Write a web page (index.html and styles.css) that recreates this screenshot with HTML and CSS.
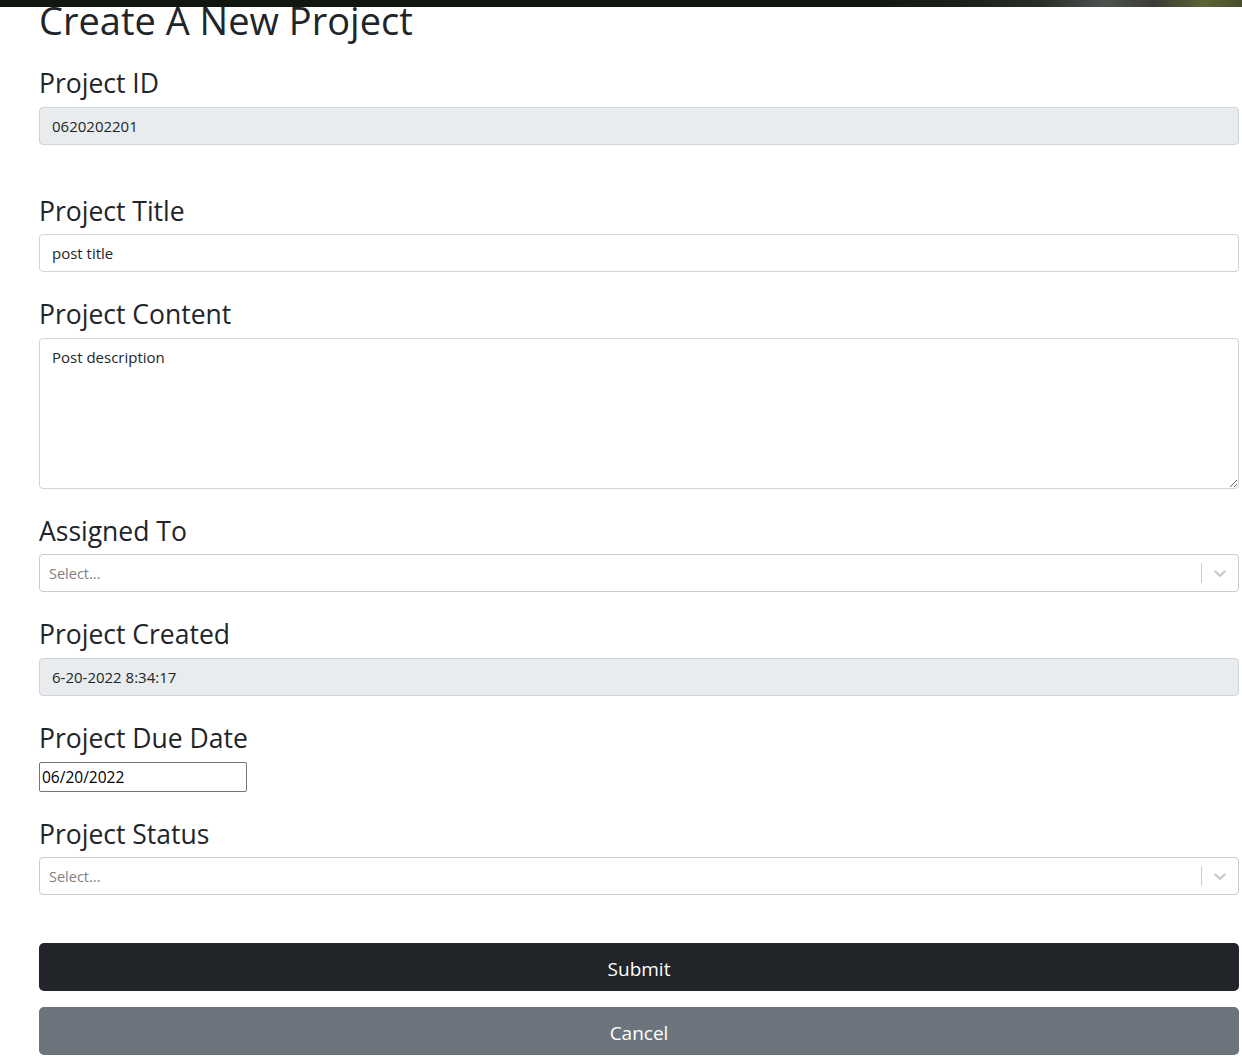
FILE: index.html
```html
<!DOCTYPE html>
<html lang="en">
<head>
<meta charset="utf-8">
<title>Create A New Project</title>
<link rel="stylesheet" href="styles.css">
</head>
<body>
<div class="topbar"></div>
<main class="page">
  <h1 class="title">Create A New Project</h1>
  <form class="form">
    <div class="group group-wide">
      <h3 class="label">Project ID</h3>
      <input class="control control-readonly" type="text" value="0620202201" readonly>
    </div>
    <div class="group">
      <h3 class="label">Project Title</h3>
      <input class="control" type="text" value="post title">
    </div>
    <div class="group">
      <h3 class="label">Project Content</h3>
      <textarea class="control control-area">Post description</textarea>
    </div>
    <div class="group">
      <h3 class="label">Assigned To</h3>
      <div class="select">
        <div class="select-value">Select...</div>
        <div class="select-indicators">
          <span class="select-sep"></span>
          <span class="select-arrow">
            <svg width="20" height="20" viewBox="0 0 20 20" aria-hidden="true"><path d="M4.516 7.548c0.436-0.446 1.043-0.481 1.576 0l3.908 3.747 3.908-3.747c0.533-0.481 1.141-0.446 1.574 0 0.436 0.445 0.408 1.197 0 1.615-0.406 0.418-4.695 4.502-4.695 4.502-0.217 0.223-0.502 0.335-0.787 0.335s-0.57-0.112-0.789-0.335c0 0-4.287-4.084-4.695-4.502s-0.436-1.17 0-1.615z"/></svg>
          </span>
        </div>
      </div>
    </div>
    <div class="group">
      <h3 class="label">Project Created</h3>
      <input class="control control-readonly" type="text" value="6-20-2022 8:34:17" readonly>
    </div>
    <div class="group">
      <h3 class="label">Project Due Date</h3>
      <input class="date" type="text" value="06/20/2022">
    </div>
    <div class="group group-wide">
      <h3 class="label">Project Status</h3>
      <div class="select">
        <div class="select-value">Select...</div>
        <div class="select-indicators">
          <span class="select-sep"></span>
          <span class="select-arrow">
            <svg width="20" height="20" viewBox="0 0 20 20" aria-hidden="true"><path d="M4.516 7.548c0.436-0.446 1.043-0.481 1.576 0l3.908 3.747 3.908-3.747c0.533-0.481 1.141-0.446 1.574 0 0.436 0.445 0.408 1.197 0 1.615-0.406 0.418-4.695 4.502-4.695 4.502-0.217 0.223-0.502 0.335-0.787 0.335s-0.57-0.112-0.789-0.335c0 0-4.287-4.084-4.695-4.502s-0.436-1.17 0-1.615z"/></svg>
          </span>
        </div>
      </div>
    </div>
    <button class="btn btn-dark" type="button">Submit</button>
    <button class="btn btn-gray" type="button">Cancel</button>
  </form>
</main>
</body>
</html>
```

FILE: styles.css
```css
* { box-sizing: border-box; }
html, body { margin: 0; padding: 0; background: #fff; }
body {
  font-family: "Open Sans", "Noto Sans", "Liberation Sans", sans-serif;
  color: #212529;
  overflow: hidden;
  height: 1060px;
}
.topbar {
  position: fixed;
  top: 0; left: 0; right: 0;
  height: 7px;
  z-index: 10;
  background: linear-gradient(90deg, #121610 0%, #131711 70%, #1c2219 78%, #2a2f2a 84%, #4d524f 89%, #3a3d33 93%, #5d6334 97%, #4a4e2a 100%);
}
.page {
  width: 1200px;
  margin-left: 39px;
}
.title {
  font-size: 38px;
  font-weight: 400;
  line-height: 48px;
  margin: -4px 0 21px;
}
.form { display: flex; flex-direction: column; }
.group { margin-bottom: 24px; display: flex; flex-direction: column; align-items: flex-start; }
.group-wide { margin-bottom: 48px; }
.label {
  font-size: 26.5px;
  font-weight: 400;
  line-height: 33.6px;
  padding-top: 2px;
  margin: 0 0 6px;
}
.control {
  display: block;
  width: 100%;
  height: 38px;
  padding: 6px 12px;
  font-family: inherit;
  font-size: 15px;
  line-height: 24px;
  color: #212529;
  background: #fff;
  border: 1px solid #ced4da;
  border-radius: 4px;
  outline: none;
}
.control-readonly { background: #e9ecef; }
.control-area { height: 151px; resize: vertical; }
.select {
  width: 100%;
  height: 38px;
  display: flex;
  align-items: center;
  border: 1px solid #ccc;
  border-radius: 4px;
  background: #fff;
}
.select-value {
  flex: 1;
  padding: 3px 9px 2px;
  font-size: 14.5px;
  color: #808080;
}
.select-indicators { display: flex; align-items: center; align-self: stretch; }
.select-sep { width: 1px; align-self: stretch; margin: 8px 0; background: #ccc; }
.select-arrow { padding: 8px; display: flex; color: #ccc; }
.select-arrow svg { fill: currentColor; }
.date {
  width: 208px;
  height: 30px;
  padding: 1px 2px;
  font-family: inherit;
  font-size: 15.5px;
  color: #000;
  border: 1px solid #767676;
  border-radius: 2px;
  background: #fff;
}
.btn {
  display: block;
  width: 100%;
  height: 48px;
  border: 0;
  border-radius: 5px;
  color: #fff;
  font-family: inherit;
  font-size: 19px;
  line-height: 28px;
  padding: 4px 0 0;
}
.btn-dark { background: #212529; margin-bottom: 16px; }
.btn-gray { background: #6c757d; }
```
